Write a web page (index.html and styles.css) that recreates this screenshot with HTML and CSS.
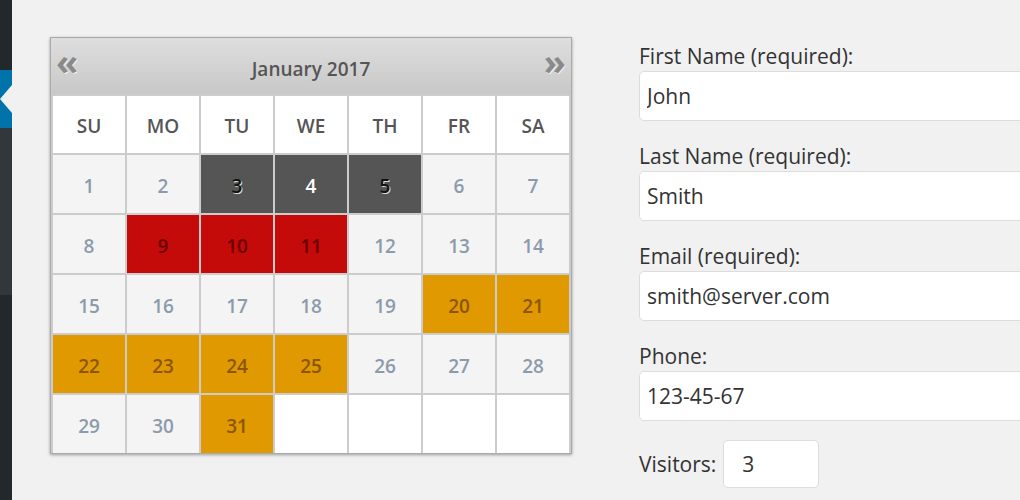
FILE: index.html
```html
<!DOCTYPE html>
<html lang="en">
<head>
  <meta charset="UTF-8">
  <title>Booking Calendar</title>
  <link rel="stylesheet" href="styles.css">
</head>
<body>

  <div class="sidebar">
    <div class="side-top"></div>
    <div class="side-active"><span class="notch"></span></div>
    <div class="side-sub"></div>
    <div class="side-rest"></div>
  </div>

  <div class="content">

    <div class="calendar">
      <div class="cal-header">
        <span class="cal-nav">&laquo;</span>
        <span class="cal-title">January 2017</span>
        <span class="cal-nav">&raquo;</span>
      </div>
      <div class="cal-grid">
        <div class="dn">SU</div>
        <div class="dn">MO</div>
        <div class="dn">TU</div>
        <div class="dn">WE</div>
        <div class="dn">TH</div>
        <div class="dn">FR</div>
        <div class="dn">SA</div>

        <div class="day">1</div>
        <div class="day">2</div>
        <div class="day booked dark-text">3</div>
        <div class="day booked">4</div>
        <div class="day booked dark-text">5</div>
        <div class="day">6</div>
        <div class="day">7</div>

        <div class="day">8</div>
        <div class="day red">9</div>
        <div class="day red">10</div>
        <div class="day red">11</div>
        <div class="day">12</div>
        <div class="day">13</div>
        <div class="day">14</div>

        <div class="day">15</div>
        <div class="day">16</div>
        <div class="day">17</div>
        <div class="day">18</div>
        <div class="day">19</div>
        <div class="day orange">20</div>
        <div class="day orange">21</div>

        <div class="day orange">22</div>
        <div class="day orange">23</div>
        <div class="day orange">24</div>
        <div class="day orange">25</div>
        <div class="day">26</div>
        <div class="day">27</div>
        <div class="day">28</div>

        <div class="day">29</div>
        <div class="day">30</div>
        <div class="day orange">31</div>
        <div class="day empty"></div>
        <div class="day empty"></div>
        <div class="day empty"></div>
        <div class="day empty"></div>
      </div>
    </div>

    <form class="booking-form">
      <div class="field">
        <label for="first-name">First Name (required):</label>
        <input type="text" id="first-name" value="John">
      </div>
      <div class="field">
        <label for="last-name">Last Name (required):</label>
        <input type="text" id="last-name" value="Smith">
      </div>
      <div class="field">
        <label for="email">Email (required):</label>
        <input type="text" id="email" value="smith@server.com">
      </div>
      <div class="field">
        <label for="phone">Phone:</label>
        <input type="text" id="phone" value="123-45-67">
      </div>
      <div class="field-inline">
        <label for="visitors">Visitors:</label>
        <input type="text" id="visitors" value="3">
      </div>
    </form>

  </div>

</body>
</html>
```

FILE: styles.css
```css
* {
  margin: 0;
  padding: 0;
  box-sizing: border-box;
}

body {
  font-family: "Open Sans", Arial, sans-serif;
  background-color: #f1f1f1;
  color: #333;
  display: flex;
  height: 500px;
  overflow: hidden;
}

/* admin sidebar strip */
.sidebar {
  width: 12px;
  flex-shrink: 0;
  display: flex;
  flex-direction: column;
}

.side-top {
  height: 70px;
  background-color: #23282d;
}

.side-active {
  height: 58px;
  background-color: #0073aa;
  position: relative;
}

.notch {
  position: absolute;
  right: 0;
  top: 15px;
  border-style: solid;
  border-width: 14px 12px 14px 0;
  border-color: transparent #f1f1f1 transparent transparent;
}

.side-sub {
  height: 167px;
  background-color: #32373c;
}

.side-rest {
  flex: 1;
  background-color: #23282d;
}

.content {
  display: flex;
  align-items: flex-start;
  padding: 37px 0 0 38px;
  gap: 67px;
}

/* calendar */
.calendar {
  width: 522px;
  flex-shrink: 0;
  border: 1px solid #aaa;
  box-shadow: 0 1px 3px rgba(0, 0, 0, 0.35);
  background-color: #ccc;
}

.cal-header {
  height: 56px;
  display: flex;
  align-items: center;
  justify-content: space-between;
  padding: 0 5px 0 5px;
  background: linear-gradient(#dedede, #c8c8c8);
}

.cal-title {
  font-size: 19px;
  font-weight: 600;
  color: #555;
  margin-top: 5px;
}

.cal-nav {
  font-size: 36px;
  font-weight: 700;
  color: #8a8a8a;
  line-height: 1;
  margin-top: -8px;
  text-shadow: 1px 1px 0 #eee;
}

.cal-grid {
  display: grid;
  grid-template-columns: repeat(7, 72px);
  grid-template-rows: 57px repeat(5, 58px);
  gap: 2px;
  padding: 2px 0 0 0;
  justify-content: center;
}

.dn,
.day {
  display: flex;
  align-items: center;
  justify-content: center;
  font-size: 19px;
}

.dn {
  background-color: #fff;
  color: #555;
  font-weight: 600;
  padding-top: 2px;
}

.day {
  background-color: #f4f4f4;
  color: #8c9bab;
  font-weight: 600;
  padding-top: 3px;
}

.day.booked {
  background-color: #555;
  color: #fff;
}

.day.dark-text {
  color: #111;
  text-shadow: 1px 1px 0 #ddd;
}

.day.red {
  background-color: #c50a0a;
  color: #6b0000;
}

.day.orange {
  background-color: #e09900;
  color: #8a5600;
}

.day.empty {
  background-color: #fff;
}

/* form */
.booking-form {
  width: 420px;
  flex-shrink: 0;
  padding-top: 9px;
}

.field {
  margin-bottom: 25px;
}

.field label {
  display: block;
  font-size: 21px;
  line-height: 21px;
  padding-bottom: 4px;
  color: #333;
}

.field input,
.field-inline input {
  display: block;
  width: 100%;
  height: 50px;
  border: 1px solid #ddd;
  border-radius: 5px;
  background-color: #fff;
  padding: 0 7px;
  font-family: "Open Sans", Arial, sans-serif;
  font-size: 21px;
  color: #333;
  outline: none;
}

.field-inline {
  display: flex;
  align-items: center;
  gap: 7px;
  margin-top: -6px;
}

.field-inline label {
  font-size: 21px;
  color: #333;
}

.field-inline input {
  width: 96px;
  height: 48px;
  padding: 0 18px;
}
```
